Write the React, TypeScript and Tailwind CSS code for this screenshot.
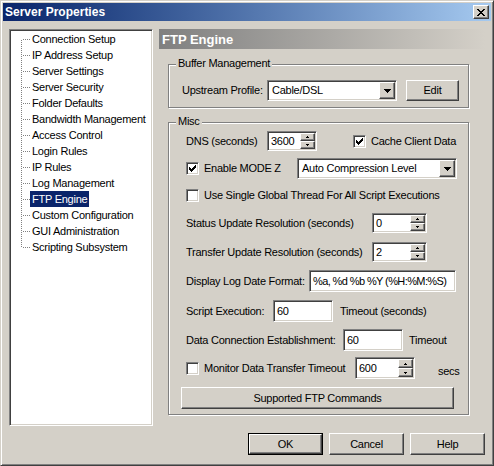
import React from "react";

const sunken =
  "border border-t-[#808080] border-l-[#808080] border-r-white border-b-white shadow-[inset_1px_1px_0_#404040,inset_-1px_-1px_0_#d4d0c8]";
const raised =
  "border border-t-white border-l-white border-r-[#404040] border-b-[#404040] shadow-[inset_-1px_-1px_0_#808080] bg-[#d4d0c8]";
const etched = "border border-[#808080] shadow-[inset_1px_1px_0_#fff,1px_1px_0_#fff]";

function Px({ rows, w, h }: { rows: [number, number, number][]; w: number; h: number }) {
  return (
    <svg width={w} height={h} viewBox={`0 0 ${w} ${h}`} shapeRendering="crispEdges">
      {rows.map(([x, y, l], i) => (
        <rect key={i} x={x} y={y} width={l} height={1} fill="#000" />
      ))}
    </svg>
  );
}

const CHECK: [number, number, number][] = [
  [6, 0, 1],
  [5, 1, 2],
  [0, 2, 1],
  [4, 2, 3],
  [0, 3, 2],
  [3, 3, 3],
  [0, 4, 5],
  [1, 5, 3],
  [2, 6, 1],
];
const DOWN7: [number, number, number][] = [
  [0, 0, 7],
  [1, 1, 5],
  [2, 2, 3],
  [3, 3, 1],
];
const UP3: [number, number, number][] = [
  [1, 0, 1],
  [0, 1, 3],
];
const DOWN3: [number, number, number][] = [
  [0, 0, 3],
  [1, 1, 1],
];
const XGLYPH: [number, number, number][] = [
  [0, 0, 2],
  [6, 0, 2],
  [1, 1, 2],
  [5, 1, 2],
  [2, 2, 4],
  [3, 3, 2],
  [2, 4, 4],
  [1, 5, 2],
  [5, 5, 2],
  [0, 6, 2],
  [6, 6, 2],
];

function Check({ checked, className = "" }: { checked?: boolean; className?: string }) {
  return (
    <div className={`${sunken} bg-white w-[13px] h-[13px] shrink-0 flex items-center justify-center ${className}`}>
      {checked && <Px rows={CHECK} w={7} h={7} />}
    </div>
  );
}

function Combo({ value, className }: { value: string; className: string }) {
  return (
    <div className={`${sunken} bg-white flex p-[1px] ${className}`}>
      <div className="flex-1 flex items-center pl-[3px] whitespace-nowrap overflow-hidden">{value}</div>
      <div className={`${raised} w-[16px] flex items-center justify-center`}>
        <Px rows={DOWN7} w={7} h={4} />
      </div>
    </div>
  );
}

function Spin({ value, className }: { value: string; className: string }) {
  return (
    <div className={`${sunken} bg-white flex p-[1px] ${className}`}>
      <div className="flex-1 flex items-center pl-[2px]">{value}</div>
      <div className="w-[15px] flex flex-col">
        <div className={`${raised} flex-1 flex items-center justify-center`}>
          <Px rows={UP3} w={3} h={2} />
        </div>
        <div className={`${raised} flex-1 flex items-center justify-center`}>
          <Px rows={DOWN3} w={3} h={2} />
        </div>
      </div>
    </div>
  );
}

function Edit({ value, className }: { value: string; className: string }) {
  return (
    <div className={`${sunken} bg-white flex items-center pl-[3px] whitespace-nowrap overflow-hidden ${className}`}>
      {value}
    </div>
  );
}

function Button({ children, className }: { children: React.ReactNode; className: string }) {
  return <div className={`${raised} flex items-center justify-center ${className}`}>{children}</div>;
}

function Legend({ children }: { children: React.ReactNode }) {
  return (
    <span className="absolute left-[7px] -top-[8px] px-[2px] bg-[#d4d0c8] leading-[13px]">{children}</span>
  );
}

const ITEMS = [
  "Connection Setup",
  "IP Address Setup",
  "Server Settings",
  "Server Security",
  "Folder Defaults",
  "Bandwidth Management",
  "Access Control",
  "Login Rules",
  "IP Rules",
  "Log Management",
  "FTP Engine",
  "Custom Configuration",
  "GUI Administration",
  "Scripting Subsystem",
];

function TreeLine({ first, last }: { first: boolean; last: boolean }) {
  const y1 = first ? 8 : 0;
  const y2 = last ? 8 : 16;
  const dots: React.ReactNode[] = [];
  for (let y = y1; y <= y2; y++) {
    if (y % 2 === 1) dots.push(<rect key={`v${y}`} x={10} y={y} width={1} height={1} fill="#808080" />);
  }
  for (let x = 12; x < 19; x += 2) {
    dots.push(<rect key={`h${x}`} x={x} y={8} width={1} height={1} fill="#808080" />);
  }
  return (
    <svg width={19} height={16} viewBox="0 0 19 16" shapeRendering="crispEdges" className="shrink-0">
      {dots}
    </svg>
  );
}

export default function App() {
  return (
    <div className="w-[494px] h-[466px] bg-[#d4d0c8] text-black text-[11px] leading-[13px] tracking-[-0.25px] font-['Liberation_Sans',Arial,sans-serif] border border-t-[#d4d0c8] border-l-[#d4d0c8] border-r-[#404040] border-b-[#404040] shadow-[inset_1px_1px_0_#fff,inset_-1px_-1px_0_#808080] p-[2px] flex flex-col">
      {/* Title bar */}
      <div className="h-[18px] shrink-0 bg-gradient-to-r from-[#0a246a] to-[#a6caf0] flex items-center pl-[2px] pr-[2px]">
        <span className="text-white font-bold text-[12px] leading-[14px] tracking-normal flex-1">Server Properties</span>
        <div className={`${raised} w-[16px] h-[14px] flex items-center justify-center`}>
          <Px rows={XGLYPH} w={8} h={7} />
        </div>
      </div>

      {/* Body */}
      <div className="px-[6px] pt-[8px] flex flex-col">
        <div className="flex gap-[6px]">
          {/* Tree */}
          <div className={`w-[144px] h-[397px] bg-white ${sunken} p-[1px] flex flex-col`}>
            {ITEMS.map((it, i) => (
              <div key={it} className="h-[16px] flex items-center">
                <TreeLine first={i === 0} last={i === ITEMS.length - 1} />
                <span
                  className={`h-[16px] flex items-center px-[2px] whitespace-nowrap ${
                    it === "FTP Engine" ? "bg-[#0a246a] text-white" : ""
                  }`}
                >
                  {it}
                </span>
              </div>
            ))}
          </div>

          {/* Right panel */}
          <div className="w-[326px] flex flex-col">
            <div className="h-[20px] bg-gradient-to-r from-[#808080] to-[#d4d0c8] flex items-center pl-[3px]">
              <span className="text-white font-bold text-[13px] leading-[15px] tracking-normal">FTP Engine</span>
            </div>

            {/* Buffer Management */}
            <div className={`relative ${etched} ml-[9px] mt-[15px] w-[301px] h-[44px]`}>
              <Legend>Buffer Management</Legend>
              <div className="pl-[13px] mt-[15px] h-[21px] flex items-center">
                <span className="w-[85px]">Upstream Profile:</span>
                <Combo value="Cable/DSL" className="w-[130px] h-[21px]" />
                <Button className="ml-[9px] w-[53px] h-[21px]">Edit</Button>
              </div>
            </div>

            {/* Misc */}
            <div className={`relative ${etched} ml-[9px] mt-[14px] w-[301px] h-[293px]`}>
              <Legend>Misc</Legend>
              <div className="pl-[12px] flex flex-col">
                <div className="ml-[5px] mt-[8px] h-[20px] flex items-center">
                  <span className="w-[81px]">DNS (seconds)</span>
                  <Spin value="3600" className="w-[50px] h-[20px]" />
                  <Check checked className="ml-[36px]" />
                  <span className="ml-[5px]">Cache Client Data</span>
                </div>
                <div className="ml-[5px] mt-[7px] h-[21px] flex items-center">
                  <Check checked />
                  <span className="ml-[5px] w-[93px]">Enable MODE Z</span>
                  <Combo value="Auto Compression Level" className="w-[160px] h-[21px]" />
                </div>
                <div className="ml-[5px] mt-[9px] h-[14px] flex items-center">
                  <Check />
                  <span className="ml-[5px] whitespace-nowrap">Use Single Global Thread For All Script Executions</span>
                </div>
                <div className="ml-[5px] mt-[11px] h-[20px] flex items-center">
                  <span className="w-[186px] whitespace-nowrap">Status Update Resolution (seconds)</span>
                  <Spin value="0" className="w-[55px] h-[20px]" />
                </div>
                <div className="ml-[5px] mt-[9px] h-[20px] flex items-center">
                  <span className="w-[186px] whitespace-nowrap">Transfer Update Resolution (seconds)</span>
                  <Spin value="2" className="w-[55px] h-[20px]" />
                </div>
                <div className="ml-[5px] mt-[8px] h-[22px] flex items-center">
                  <span className="w-[123px] whitespace-nowrap">Display Log Date Format:</span>
                  <Edit value="%a, %d %b %Y (%H:%M:%S)" className="w-[147px] h-[22px] tracking-[-0.6px]" />
                </div>
                <div className="ml-[5px] mt-[8px] h-[22px] flex items-center">
                  <span className="w-[87px]">Script Execution:</span>
                  <Edit value="60" className="w-[60px] h-[22px]" />
                  <span className="ml-[7px]">Timeout (seconds)</span>
                </div>
                <div className="ml-[5px] mt-[7px] h-[22px] flex items-center">
                  <span className="w-[157px] whitespace-nowrap">Data Connection Establishment:</span>
                  <Edit value="60" className="w-[60px] h-[22px]" />
                  <span className="ml-[6px]">Timeout</span>
                </div>
                <div className="ml-[5px] mt-[6px] h-[22px] flex items-center">
                  <Check />
                  <span className="ml-[5px] w-[151px] whitespace-nowrap">Monitor Data Transfer Timeout</span>
                  <Spin value="600" className="w-[60px] h-[22px]" />
                  <span className="ml-[23px] mt-[6px]">secs</span>
                </div>
                <Button className="mt-[8px] w-[273px] h-[22px]">Supported FTP Commands</Button>
              </div>
            </div>
          </div>
        </div>

        {/* Bottom buttons */}
        <div className="mt-[7px] flex justify-end gap-[6px]">
          <div className="w-[75px] h-[22px] border border-black flex">
            <Button className="flex-1">OK</Button>
          </div>
          <Button className="w-[75px] h-[22px]">Cancel</Button>
          <Button className="w-[75px] h-[22px]">Help</Button>
        </div>
      </div>
    </div>
  );
}
